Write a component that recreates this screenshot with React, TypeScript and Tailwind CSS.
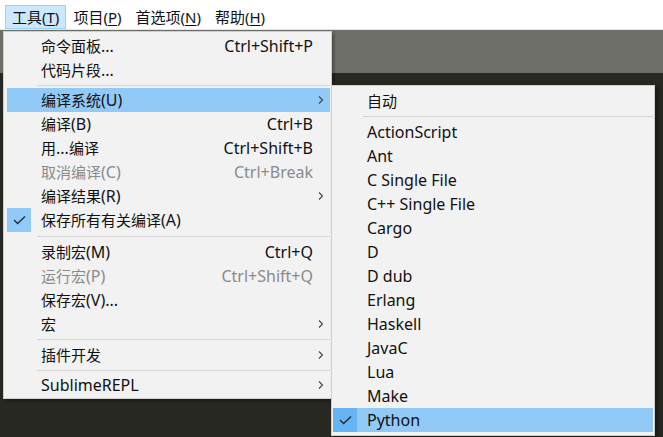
import React from "react";

type Item =
  | { kind: "sep"; h: string }
  | {
      kind: "item";
      label: string;
      shortcut?: string;
      arrow?: boolean;
      disabled?: boolean;
      checked?: boolean;
      active?: boolean;
    };

const toolsMenu: Item[] = [
  { kind: "item", label: "命令面板...", shortcut: "Ctrl+Shift+P" },
  { kind: "item", label: "代码片段..." },
  { kind: "sep", h: "h-[6px]" },
  { kind: "item", label: "编译系统(U)", arrow: true, active: true },
  { kind: "item", label: "编译(B)", shortcut: "Ctrl+B" },
  { kind: "item", label: "用...编译", shortcut: "Ctrl+Shift+B" },
  { kind: "item", label: "取消编译(C)", shortcut: "Ctrl+Break", disabled: true },
  { kind: "item", label: "编译结果(R)", arrow: true },
  { kind: "item", label: "保存所有有关编译(A)", checked: true },
  { kind: "sep", h: "h-[8px]" },
  { kind: "item", label: "录制宏(M)", shortcut: "Ctrl+Q" },
  { kind: "item", label: "运行宏(P)", shortcut: "Ctrl+Shift+Q", disabled: true },
  { kind: "item", label: "保存宏(V)..." },
  { kind: "item", label: "宏", arrow: true },
  { kind: "sep", h: "h-[7px]" },
  { kind: "item", label: "插件开发", arrow: true },
  { kind: "sep", h: "h-[6px]" },
  { kind: "item", label: "SublimeREPL", arrow: true },
];

const buildSystems = [
  "ActionScript",
  "Ant",
  "C Single File",
  "C++ Single File",
  "Cargo",
  "D",
  "D dub",
  "Erlang",
  "Haskell",
  "JavaC",
  "Lua",
  "Make",
  "Python",
];

// Latin runs in the reference render a touch larger than the CJK ones
function Mixed({ text }: { text: string }) {
  const parts = text.match(/[\u4e00-\u9fff]+|[^\u4e00-\u9fff]+/g) ?? [];
  return (
    <>
      {parts.map((p, i) =>
        /[\u4e00-\u9fff]/.test(p) ? (
          <span key={i}>{p}</span>
        ) : (
          <span key={i} className="text-[16px]">
            {p}
          </span>
        )
      )}
    </>
  );
}

function Chevron() {
  return (
    <svg width="6" height="10" viewBox="0 0 6 10" fill="none">
      <path d="M1 1.5 L4.5 5 L1 8.5" stroke="#444" strokeWidth="1.1" />
    </svg>
  );
}

function Check() {
  return (
    <svg width="13" height="10" viewBox="0 0 13 10" fill="none">
      <path d="M1 5 L4.6 8.5 L12 1.5" stroke="#1f2a36" strokeWidth="1.3" />
    </svg>
  );
}

function CheckBox({ dark }: { dark?: boolean }) {
  return (
    <div
      className={`w-[24px] h-[24px] flex items-center justify-center ${
        dark ? "bg-[#66b4f4]" : "bg-[#91c9f7]"
      }`}
    >
      <Check />
    </div>
  );
}

function MenuRow({ item }: { item: Extract<Item, { kind: "item" }> }) {
  return (
    <div
      className={`ml-[3px] mr-[1px] h-[24px] flex items-center ${
        item.active ? "bg-[#91c9f7]" : ""
      } ${item.disabled ? "text-[#8a8a8a]" : "text-[#111]"}`}
    >
      {item.checked ? <CheckBox /> : <div className="w-[24px] h-[24px]" />}
      <span className="ml-[10px] flex-1 whitespace-nowrap">
        <Mixed text={item.label} />
      </span>
      {item.shortcut && (
        <span className="whitespace-nowrap text-[16px]">{item.shortcut}</span>
      )}
      <div className="w-[17px] pl-[5px] flex items-center">{item.arrow && <Chevron />}</div>
    </div>
  );
}

export default function App() {
  return (
    <div className="relative w-[663px] h-[437px] overflow-hidden bg-[#272822] text-[15px] leading-none font-['Noto_Sans','Noto_Sans_CJK_SC',sans-serif]">
      {/* menu bar */}
      <div className="h-[30px] bg-white flex items-end pl-[5px] text-[#111] border-b border-[#e6e6e6]">
        <div className="h-[24px] px-[6px] flex items-center bg-[#cce8ff] border border-[#99d1ff]">
          工具(<span className="underline underline-offset-2">T</span>)
        </div>
        <div className="h-[24px] px-[7px] flex items-center">
          项目(<span className="underline underline-offset-2">P</span>)
        </div>
        <div className="h-[24px] px-[7px] flex items-center">
          首选项(<span className="underline underline-offset-2">N</span>)
        </div>
        <div className="h-[24px] px-[7px] flex items-center">
          帮助(<span className="underline underline-offset-2">H</span>)
        </div>
      </div>
      <div className="h-[43px] bg-[#6f6f69]" />

      {/* tools menu */}
      <div className="absolute left-[3px] top-[31px] w-[329px] bg-[#f2f2f2] border border-[#cfcfcf] pt-[2px] pb-[1px] shadow-[2px_2px_3px_rgba(0,0,0,0.35)]">
        {toolsMenu.map((item, i) =>
          item.kind === "sep" ? (
            <div key={i} className={`${item.h} flex items-center`}>
              <div className="ml-[33px] mr-[1px] flex-1 border-t border-[#d6d6d6]" />
            </div>
          ) : (
            <MenuRow key={i} item={item} />
          )
        )}
      </div>

      {/* build system submenu */}
      <div className="absolute left-[331px] top-[85px] w-[324px] bg-[#f2f2f2] border border-[#cfcfcf] pt-[3px] pb-[3px] shadow-[3px_3px_4px_rgba(0,0,0,0.4)] text-[#111]">
        <div className="ml-[1px] mr-[1px] h-[24px] flex items-center">
          <div className="w-[24px]" />
          <span className="ml-[10px]">自动</span>
        </div>
        <div className="h-[7px] flex items-center">
          <div className="ml-[31px] mr-[1px] flex-1 border-t border-[#d6d6d6]" />
        </div>
        {buildSystems.map((name) => {
          const selected = name === "Python";
          return (
            <div
              key={name}
              className={`ml-[1px] mr-[1px] h-[24px] flex items-center ${
                selected ? "bg-[#91c9f7]" : ""
              }`}
            >
              {selected ? <CheckBox dark /> : <div className="w-[24px] h-[24px]" />}
              <span className="ml-[10px] whitespace-nowrap text-[16px]">{name}</span>
            </div>
          );
        })}
      </div>
    </div>
  );
}
